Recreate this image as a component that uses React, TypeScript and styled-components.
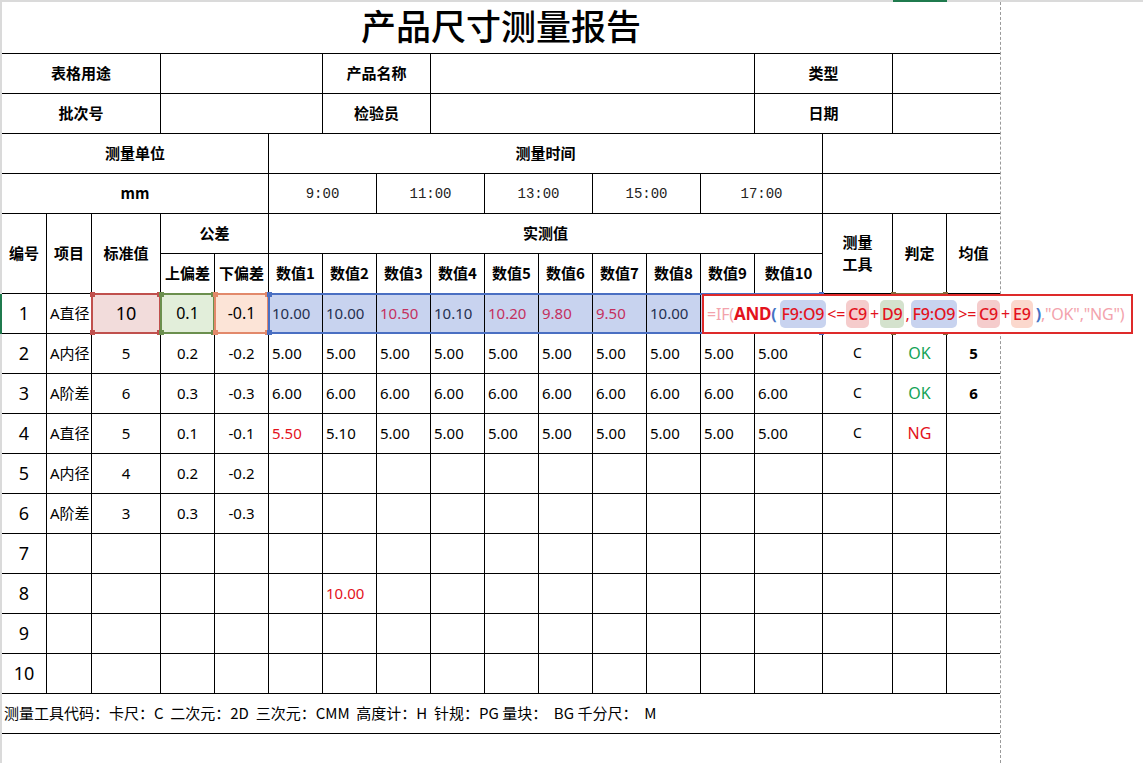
import React from 'react';
import styled, { createGlobalStyle, css } from 'styled-components';

const GlobalStyle = createGlobalStyle`
  html, body { margin: 0; padding: 0; background: #fff; }
  body { font-family: "Noto Sans", "Noto Sans CJK SC", sans-serif; color: #000; }
`;

const COLS = '45px 45px 69px 54px 54px repeat(9, 54px) 68px 70px 54px 53px';

const Page = styled.div`
  width: 1143px;
  height: 763px;
  overflow: hidden;
  display: flex;
  flex-direction: column;
`;

const TopRuler = styled.div`
  height: 2px;
  flex: none;
  background: #dadada;
  display: grid;
  grid-template-columns: 2px ${COLS};
`;

const RulerMark = styled.div`
  grid-column: 18;
  background: #1f7a4d;
`;

const Body = styled.div`
  flex: 1;
  display: flex;
  border-left: 2px solid #dadada;
`;

const SheetArea = styled.div`
  width: 998px;
  flex: none;
  border-right: 1px dashed #9a9a9a;
`;

const Sheet = styled.div`
  display: grid;
  grid-template-columns: ${COLS};
  grid-template-rows: 52px repeat(17, 40px);
`;

type CellProps = {
  $span?: number;
  $rows?: number;
  $align?: 'left' | 'center';
  $bold?: boolean;
  $size?: number;
  $color?: string;
  $mono?: boolean;
  $bg?: string;
  $noRight?: boolean;
  $rowMark?: boolean;
};

const Cell = styled.div<CellProps>`
  position: relative;
  grid-column: span ${(p) => p.$span ?? 1};
  grid-row: span ${(p) => p.$rows ?? 1};
  display: flex;
  align-items: center;
  justify-content: ${(p) => (p.$align === 'left' ? 'flex-start' : 'center')};
  text-align: center;
  padding: 0 0 2px ${(p) => (p.$align === 'left' ? '3px' : '0')};
  border-right: ${(p) => (p.$noRight ? 'none' : '1px solid #000')};
  border-bottom: 1px solid #000;
  background: ${(p) => p.$bg ?? 'transparent'};
  font-size: ${(p) => p.$size ?? 15}px;
  font-weight: ${(p) => (p.$bold ? 700 : 400)};
  color: ${(p) => p.$color ?? '#000'};
  white-space: nowrap;
  line-height: 22px;
  ${(p) =>
    p.$mono &&
    css`
      font-family: "Liberation Mono", "DejaVu Sans Mono", monospace;
      font-size: 14px;
      color: #222;
      padding-bottom: 0;
    `}
  ${(p) =>
    p.$rowMark &&
    css`
      box-shadow: -2px 0 0 #1f7a4d;
    `}
`;

const TitleCell = styled(Cell)`
  font-family: "Noto Sans CJK SC", sans-serif;
  font-size: 35px;
  font-weight: 500;
  padding-bottom: 5px;
`;

const Label = styled(Cell)`
  font-family: "Noto Sans CJK SC", "Noto Sans", sans-serif;
  font-weight: 700;
  font-size: 15px;
`;

const FooterCell = styled(Cell)`
  font-family: "Noto Sans CJK SC", "Noto Sans", sans-serif;
  font-size: 15px;
  padding-left: 2px;
`;

const Ring = styled.span<{ $color: string; $w?: number }>`
  position: absolute;
  z-index: 2;
  left: -1px;
  top: -1px;
  bottom: -1px;
  ${(p) => (p.$w ? `width: ${p.$w}px;` : 'right: -1px;')}
  border: 2px solid ${(p) => p.$color};
  box-sizing: border-box;
  pointer-events: none;
`;

const Handle = styled.span<{ $color: string; $pos: 'tl' | 'tr' | 'bl' | 'br' }>`
  position: absolute;
  width: 5px;
  height: 5px;
  background: ${(p) => p.$color};
  ${(p) => (p.$pos[0] === 't' ? 'top: -3px;' : 'bottom: -3px;')}
  ${(p) => (p.$pos[1] === 'l' ? 'left: -3px;' : 'right: -3px;')}
`;

const Marked: React.FC<{ color: string; w?: number }> = ({ color, w }) => (
  <Ring $color={color} $w={w}>
    <Handle $color={color} $pos="tl" />
    <Handle $color={color} $pos="tr" />
    <Handle $color={color} $pos="bl" />
    <Handle $color={color} $pos="br" />
  </Ring>
);

const Editor = styled.div`
  position: absolute;
  z-index: 5;
  left: 1px;
  top: 0;
  width: 431px;
  height: 40px;
  box-sizing: border-box;
  border: 2px solid #de2a2a;
  background: #fff;
  display: flex;
  align-items: center;
  padding: 0 0 1px 3px;
  font-family: "Noto Sans", sans-serif;
  font-size: 16px;
  letter-spacing: -0.2px;
  white-space: nowrap;
  overflow: hidden;
`;

type TokKind = 'dim' | 'fn' | 'paren' | 'op' | 'ref';

const Tok = styled.span<{ $kind: TokKind; $bg?: string }>`
  color: ${(p) =>
    p.$kind === 'dim' ? '#f3a3ac' : p.$kind === 'paren' ? '#4472c4' : '#e3131d'};
  font-weight: ${(p) => (p.$kind === 'fn' || p.$kind === 'paren' ? 700 : p.$kind === 'ref' ? 500 : 400)};
  ${(p) =>
    p.$kind === 'fn' &&
    css`
      font-size: 17px;
    `}
  ${(p) =>
    p.$kind === 'ref' &&
    css`
      background: ${p.$bg};
      border-radius: 5px;
      padding: 3px 2px;
    `}
  ${(p) =>
    p.$kind === 'op' &&
    css`
      margin: 0 1px;
    `}
`;

const Gap = styled.span`
  display: inline-block;
  width: 3px;
`;

const BLUE_BG = '#c8d3ef';

const Formula = () => (
  <Editor>
    <Tok $kind="dim">=IF(</Tok>
    <Tok $kind="fn">AND</Tok>
    <Tok $kind="paren">(</Tok>
    <Gap />
    <Tok $kind="ref" $bg={BLUE_BG}>F9:O9</Tok>
    <Tok $kind="op">&lt;=</Tok>
    <Tok $kind="ref" $bg="#f5cccc">C9</Tok>
    <Tok $kind="op">+</Tok>
    <Tok $kind="ref" $bg="#d4e2cd">D9</Tok>
    <Tok $kind="op">,</Tok>
    <Tok $kind="ref" $bg={BLUE_BG}>F9:O9</Tok>
    <Tok $kind="op">&gt;=</Tok>
    <Tok $kind="ref" $bg="#f5cccc">C9</Tok>
    <Tok $kind="op">+</Tok>
    <Tok $kind="ref" $bg="#fbd8cd">E9</Tok>
    <Gap />
    <Tok $kind="paren">)</Tok>
    <Tok $kind="dim">,"OK","NG")</Tok>
  </Editor>
);

type Row = {
  item: string;
  std: string;
  up: string;
  low: string;
  vals: (string | { v: string; c: string })[];
  tool?: string;
  judge?: 'OK' | 'NG';
  avg?: string;
};

const RED = '#e3121c';

const rows: Row[] = [
  { item: 'A内径', std: '5', up: '0.2', low: '-0.2', vals: Array(10).fill('5.00'), tool: 'C', judge: 'OK', avg: '5' },
  { item: 'A阶差', std: '6', up: '0.3', low: '-0.3', vals: Array(10).fill('6.00'), tool: 'C', judge: 'OK', avg: '6' },
  {
    item: 'A直径',
    std: '5',
    up: '0.1',
    low: '-0.1',
    vals: [{ v: '5.50', c: RED }, '5.10', '5.00', '5.00', '5.00', '5.00', '5.00', '5.00', '5.00', '5.00'],
    tool: 'C',
    judge: 'NG',
  },
  { item: 'A内径', std: '4', up: '0.2', low: '-0.2', vals: Array(10).fill('') },
  { item: 'A阶差', std: '3', up: '0.3', low: '-0.3', vals: Array(10).fill('') },
  { item: '', std: '', up: '', low: '', vals: Array(10).fill('') },
  { item: '', std: '', up: '', low: '', vals: ['', { v: '10.00', c: RED }, '', '', '', '', '', '', '', ''] },
  { item: '', std: '', up: '', low: '', vals: Array(10).fill('') },
  { item: '', std: '', up: '', low: '', vals: Array(10).fill('') },
];

const firstVals: { v: string; c: string }[] = [
  { v: '10.00', c: '#25304f' },
  { v: '10.00', c: '#25304f' },
  { v: '10.50', c: '#c4305e' },
  { v: '10.10', c: '#25304f' },
  { v: '10.20', c: '#c4305e' },
  { v: '9.80', c: '#c4305e' },
  { v: '9.50', c: '#c4305e' },
  { v: '10.00', c: '#25304f' },
];

const times = ['9:00', '11:00', '13:00', '15:00', '17:00'];

export default function App() {
  return (
    <>
      <GlobalStyle />
      <Page>
        <TopRuler>
          <RulerMark />
        </TopRuler>
        <Body>
          <SheetArea>
            <Sheet>
              <TitleCell $span={18} $noRight>产品尺寸测量报告</TitleCell>

              <Label $span={3}>表格用途</Label>
              <Cell $span={3} />
              <Label $span={2}>产品名称</Label>
              <Cell $span={6} />
              <Label $span={2}>类型</Label>
              <Cell $span={2} $noRight />

              <Label $span={3}>批次号</Label>
              <Cell $span={3} />
              <Label $span={2}>检验员</Label>
              <Cell $span={6} />
              <Label $span={2}>日期</Label>
              <Cell $span={2} $noRight />

              <Label $span={5}>测量单位</Label>
              <Label $span={10}>测量时间</Label>
              <Cell $span={3} $noRight />

              <Label $span={5}>mm</Label>
              {times.map((t) => (
                <Cell key={t} $span={2} $mono>
                  {t}
                </Cell>
              ))}
              <Cell $span={3} $noRight />

              <Label $rows={2}>编号</Label>
              <Label $rows={2}>项目</Label>
              <Label $rows={2}>标准值</Label>
              <Label $span={2}>公差</Label>
              <Label $span={10}>实测值</Label>
              <Label $rows={2}>
                测量
                <br />
                工具
              </Label>
              <Label $rows={2}>判定</Label>
              <Label $rows={2} $noRight>均值</Label>
              <Label>上偏差</Label>
              <Label>下偏差</Label>
              {Array.from({ length: 10 }, (_, i) => (
                <Label key={i}>数值{i + 1}</Label>
              ))}

              {/* data row 1 (selected) */}
              <Cell $size={18} $rowMark>1</Cell>
              <Cell $align="left">A直径</Cell>
              <Cell $size={18} $bg="#f2dcdb">
                10
                <Marked color="#c0504d" />
              </Cell>
              <Cell $size={16} $bg="#e2eeda">
                0.1
                <Marked color="#6b8f4e" />
              </Cell>
              <Cell $size={16} $bg="#fce4d7">
                -0.1
                <Marked color="#e2896b" />
              </Cell>
              {firstVals.map((f, i) => (
                <Cell key={i} $align="left" $bg={BLUE_BG} $color={f.c}>
                  {f.v}
                  {i === 0 && <Marked color="#4a6fc2" w={555} />}
                </Cell>
              ))}
              <Cell $bg={BLUE_BG}>
                <Formula />
              </Cell>
              <Cell $bg={BLUE_BG} />
              <Cell />
              <Cell>
                <Marked color="#7f6a3c" />
              </Cell>
              <Cell $noRight />

              {rows.map((r, ri) => (
                <React.Fragment key={ri}>
                  <Cell $size={18}>{ri + 2}</Cell>
                  <Cell $align="left">{r.item}</Cell>
                  <Cell>{r.std}</Cell>
                  <Cell>{r.up}</Cell>
                  <Cell>{r.low}</Cell>
                  {r.vals.map((v, vi) =>
                    typeof v === 'string' ? (
                      <Cell key={vi} $align="left">
                        {v}
                      </Cell>
                    ) : (
                      <Cell key={vi} $align="left" $color={v.c}>
                        {v.v}
                      </Cell>
                    )
                  )}
                  <Cell $size={14}>{r.tool ?? ''}</Cell>
                  <Cell $size={16} $color={r.judge === 'OK' ? '#13a356' : RED}>
                    {r.judge ?? ''}
                  </Cell>
                  <Cell $bold $noRight>
                    {r.avg ?? ''}
                  </Cell>
                </React.Fragment>
              ))}

              <FooterCell $span={18} $align="left" $noRight>
                测量工具代码：卡尺：C&nbsp;&nbsp;二次元：2D&nbsp;&nbsp;三次元：CMM&nbsp;&nbsp;高度计：H&nbsp;&nbsp;针规：PG 量块：&nbsp;&nbsp;BG 千分尺：&nbsp;&nbsp;M
              </FooterCell>
            </Sheet>
          </SheetArea>
        </Body>
      </Page>
    </>
  );
}
